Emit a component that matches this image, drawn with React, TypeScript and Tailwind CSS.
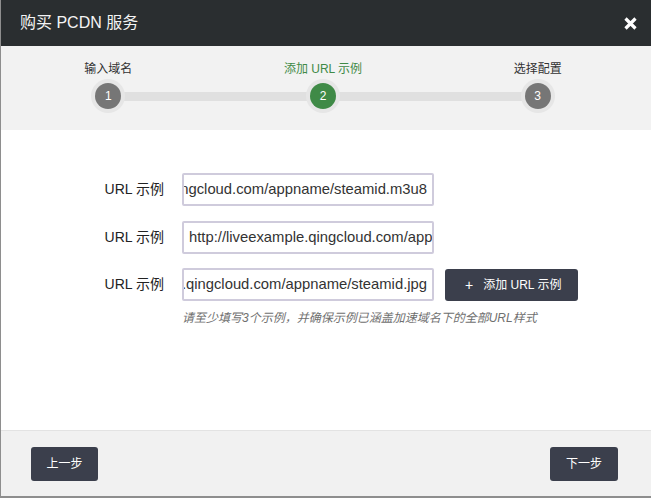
const font = "font-['Liberation_Sans','Noto_Sans_CJK_SC',sans-serif]";

const steps = [
  { label: '输入域名', n: 1, active: false },
  { label: '添加 URL 示例', n: 2, active: true },
  { label: '选择配置', n: 3, active: false },
];

const URL_TEXT = 'http://liveexample.qingcloud.com/appname/steamid';

function UrlField({ value, alignEnd }: { value: string; alignEnd?: boolean }) {
  return (
    <div
      className={
        'flex h-[33px] w-[252px] shrink-0 items-center overflow-hidden whitespace-nowrap rounded-[2px] border-2 border-[#cfcbdc] bg-white text-[14.8px] text-[#333] ' +
        (alignEnd ? 'justify-end pr-[5px]' : 'justify-start pl-[5px]')
      }
    >
      <span className="shrink-0">{value}</span>
    </div>
  );
}

function StepDot({ n, active }: { n: number; active: boolean }) {
  return (
    <div className="grid size-[34px] place-items-center rounded-full bg-[#e6e6e6]">
      <div
        className={
          'grid size-[26px] place-items-center rounded-full text-[12px] text-white ' +
          (active ? 'bg-[#3f8a47]' : 'bg-[#767676]')
        }
      >
        {n}
      </div>
    </div>
  );
}

export default function App() {
  return (
    <div
      className={`flex h-[498px] w-[651px] flex-col border-b-2 border-l border-[#8e8e8e] bg-white ${font}`}
    >
      {/* header */}
      <div className="flex h-[46px] shrink-0 items-center justify-between bg-[#2a2e30] pl-[19px] pr-[14px]">
        <span className="text-[16px] text-[#f4f4f4]">购买 PCDN 服务</span>
        <svg width="13" height="13" viewBox="0 0 13 13" aria-hidden>
          <path d="M1.5 1.5 L11.5 11.5 M11.5 1.5 L1.5 11.5" stroke="#fff" strokeWidth="3.2" />
        </svg>
      </div>

      {/* steps */}
      <div className="relative h-[84px] shrink-0 bg-[#f2f2f2] pt-[15px]">
        <div className="absolute left-[107px] top-[46px] h-[9px] w-[430px] bg-[#e0e0e0]" />
        <div className="relative grid w-[644px] grid-cols-3">
          {steps.map((s) => (
            <div key={s.n} className="flex flex-col items-center gap-[2px]">
              <span
                className={
                  'text-[12px] leading-[16px] ' +
                  (s.active ? 'text-[#3f8a47]' : 'text-[#333]')
                }
              >
                {s.label}
              </span>
              <StepDot n={s.n} active={s.active} />
            </div>
          ))}
        </div>
      </div>

      {/* body */}
      <div className="flex h-[300px] shrink-0 flex-col bg-white pt-[43px]">
        <div className="flex flex-col gap-[14.5px]">
          {[0, 1, 2].map((i) => (
            <div key={i} className="flex items-center">
              <span className="w-[164px] shrink-0 pr-px text-right text-[14px] text-[#222]">
                URL 示例
              </span>
              <div className="ml-[17px] flex items-center">
                {i === 0 && <UrlField value={URL_TEXT + '.m3u8'} alignEnd />}
                {i === 1 && <UrlField value={URL_TEXT + '.m3u8'} />}
                {i === 2 && <UrlField value={URL_TEXT + '.jpg'} alignEnd />}
                {i === 2 && (
                  <button
                    type="button"
                    className="ml-[11px] flex h-[32px] w-[133px] items-center rounded-[3px] bg-[#3b3f4c] pl-[20px] text-[12px] text-white"
                  >
                    <span className="text-[14px] leading-none">+</span>
                    <span className="ml-[10px]">添加 URL 示例</span>
                  </button>
                )}
              </div>
            </div>
          ))}
        </div>
        <p className="ml-[181px] mt-[9px] text-[12px] leading-[16px] italic text-[#6f6f6f]">
          请至少填写3个示例，并确保示例已涵盖加速域名下的全部URL样式
        </p>
      </div>

      {/* footer */}
      <div className="flex flex-1 items-start justify-between border-t border-[#e3e3e3] bg-[#f1f1f1] pl-[30px] pr-[33px] pt-[16px]">
        <button
          type="button"
          className="h-[34px] w-[67px] rounded-[3px] bg-[#3b3f4c] text-[12px] text-white"
        >
          上一步
        </button>
        <button
          type="button"
          className="h-[34px] w-[68px] rounded-[3px] bg-[#3b3f4c] text-[12px] text-white"
        >
          下一步
        </button>
      </div>
    </div>
  );
}
